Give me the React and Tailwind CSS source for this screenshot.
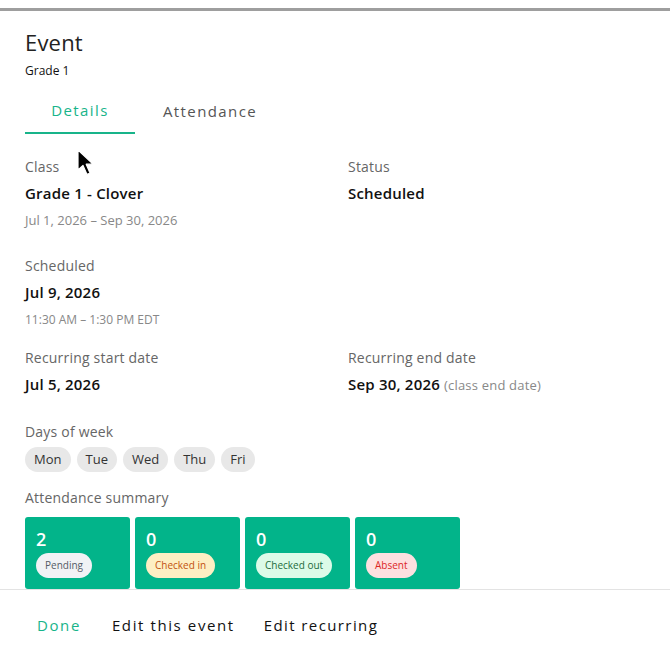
import React from 'react';

const days = ['Mon', 'Tue', 'Wed', 'Thu', 'Fri'];

const summary = [
    { count: 2, label: 'Pending', badge: 'bg-[#f1f2f5] text-[#555b66]' },
    { count: 0, label: 'Checked in', badge: 'bg-[#fdefc3] text-[#c2510f]' },
    { count: 0, label: 'Checked out', badge: 'bg-[#dcfbe8] text-[#1d6b3c]' },
    { count: 0, label: 'Absent', badge: 'bg-[#fde0e0] text-[#dc2626]' },
];

const Field = ({ label, value, extra, sub }) => (
    <div>
        <div className="text-[14px] font-medium text-[#666] leading-5 tracking-[0.2px]">{label}</div>
        <div className="mt-[6px] text-[15px] font-semibold text-[#111] leading-5 tracking-[0.2px]">
            {value}
            {extra && <span className="ml-1 text-[13px] font-medium text-[#888]">{extra}</span>}
        </div>
        {sub && <div className="mt-[7px] text-[13px] font-medium text-[#888] leading-5">{sub}</div>}
    </div>
);

const App = () => {
    return (
        <div className="w-[670px] h-[663px] bg-white overflow-hidden font-['Open_Sans',sans-serif] relative">
            <div className="h-[8px] bg-white" />
            <div className="h-[3px] bg-[#9e9e9e]" />
            <div className="h-[652px] rounded-t-[4px] bg-white flex flex-col">
                <div className="flex-1 px-[25px] pt-[17px] overflow-hidden">
                    <h1 className="text-[22px] font-medium text-[#222] leading-7 tracking-[0.2px]">Event</h1>
                    <div className="mt-[7px] text-[12px] font-medium text-[#111] leading-4">Grade 1</div>

                    {/* Tabs */}
                    <div className="mt-[14px] flex">
                        <div className="w-[110px] h-[41px] pb-[5px] flex items-center justify-center text-[15px] font-medium tracking-[1.4px] text-[#18b48a] border-b-2 border-[#18b48a]">
                            Details
                        </div>
                        <div className="w-[150px] h-[41px] pb-[5px] flex items-center justify-center text-[15px] font-medium tracking-[1.4px] text-[#555]">
                            Attendance
                        </div>
                    </div>

                    <div className="mt-[23px] grid grid-cols-[323px_1fr] gap-y-[26px]">
                        <Field label="Class" value="Grade 1 - Clover" sub="Jul 1, 2026 – Sep 30, 2026" />
                        <Field label="Status" value="Scheduled" />
                        <Field label="Scheduled" value="Jul 9, 2026" sub={<span className="text-[12px]">11:30 AM – 1:30 PM EDT</span>} />
                        <div />
                    </div>
                    <div className="mt-[18px] grid grid-cols-[323px_1fr]">
                        <Field label="Recurring start date" value="Jul 5, 2026" />
                        <Field label="Recurring end date" value="Sep 30, 2026" extra="(class end date)" />
                    </div>

                    <div className="mt-[27px] text-[14px] font-medium text-[#666] leading-5 tracking-[0.2px]">Days of week</div>
                    <div className="mt-[5px] flex gap-[6px]">
                        {days.map((d) => (
                            <span key={d} className="h-[25px] px-[9px] rounded-full bg-[#e8e8e8] text-[13px] font-medium text-[#333] flex items-center">
                                {d}
                            </span>
                        ))}
                    </div>

                    <div className="mt-[16px] text-[14px] font-medium text-[#666] leading-5 tracking-[0.2px]">Attendance summary</div>
                    <div className="mt-[9px] flex gap-[5px]">
                        {summary.map((s) => (
                            <div key={s.label} className="w-[105px] h-[72px] shrink-0 rounded-[3px] bg-[#02b48a] px-[11px] pt-[10px]">
                                <div className="text-[18px] font-semibold text-white leading-6">{s.count}</div>
                                <span className={`mt-[2px] inline-flex items-center h-[25px] px-[9px] rounded-full text-[10px] font-medium ${s.badge}`}>
                                    {s.label}
                                </span>
                            </div>
                        ))}
                    </div>
                </div>

                <div className="h-[74px] border-t border-[#e3e3e3] flex items-center pl-[25px] pb-[2px]">
                    <button className="px-[12px] py-[6px] text-[15px] font-medium tracking-[1.6px] text-[#18b48a]">Done</button>
                    <button className="ml-[7px] px-[12px] py-[6px] text-[15px] font-medium tracking-[1.6px] text-[#111]">Edit this event</button>
                    <button className="ml-[5px] px-[12px] py-[6px] text-[15px] font-medium tracking-[1.4px] text-[#111]">Edit recurring</button>
                </div>
            </div>

            {/* mouse cursor */}
            <svg className="absolute left-[77px] top-[149px]" width="18" height="28" viewBox="0 0 18 28">
                <path d="M1 1 L1 21 L6 16.5 L10 25.5 L13 24 L9.2 15.2 L16 15 Z" fill="#000" stroke="#fff" strokeWidth="1.2" strokeLinejoin="round" />
            </svg>
        </div>
    );
};

export default App;
